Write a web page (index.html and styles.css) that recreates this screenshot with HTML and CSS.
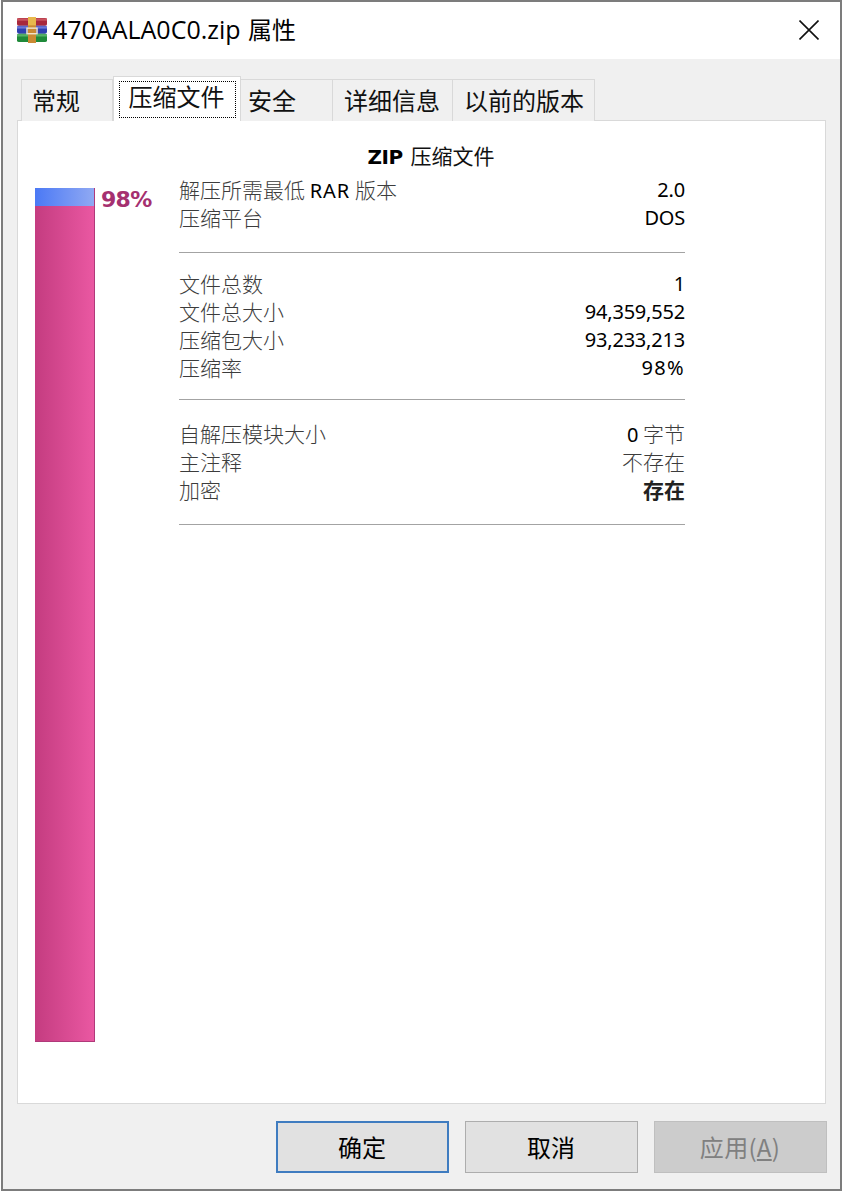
FILE: index.html
```html
<!DOCTYPE html>
<html lang="zh-CN">
<head>
<meta charset="utf-8">
<title>470AALA0C0.zip 属性</title>
<link rel="stylesheet" href="styles.css">
</head>
<body>
<div class="window">
  <header class="titlebar">
    <svg class="app-icon" width="32" height="26" viewBox="0 0 32 28" preserveAspectRatio="none">
      <rect x="1" y="1" width="30" height="8.5" rx="2" fill="#a8283c"/>
      <rect x="1" y="1.5" width="30" height="2.5" fill="#c9545f"/>
      <rect x="1" y="9.5" width="30" height="8.5" rx="2" fill="#2f3fb0"/>
      <rect x="1" y="10" width="30" height="2.5" fill="#6c78d8"/>
      <rect x="1" y="18" width="30" height="9" rx="2" fill="#1f8a3a"/>
      <rect x="1" y="18.500" width="30" height="2.500" fill="#58b268"/>
      <rect x="12" y="0" width="8" height="28" fill="#c98a34"/>
      <rect x="12" y="0" width="8" height="9" fill="#e8b84c"/>
      <rect x="11" y="12" width="10" height="6" fill="none" stroke="#f0e6d0" stroke-width="1.500"/>
    </svg>
    <h1 class="title">470AALA0C0.zip <span class="title-cjk">属性</span></h1>
    <svg class="close" width="20" height="20" viewBox="0 0 20 20">
      <path d="M0.500 0.500L19.500 19.500M19.500 0.500L0.500 19.500" stroke="#111" stroke-width="1.600" fill="none"/>
    </svg>
  </header>
  <div class="body">
    <nav class="tabs">
      <div class="tab tab-a">常规</div>
      <div class="tab tab-active"><span class="focus">压缩文件</span></div>
      <div class="tab tab-b">安全</div>
      <div class="tab tab-c">详细信息</div>
      <div class="tab tab-d">以前的版本</div>
    </nav>
    <main class="panel">
      <div class="gauge">
        <div class="bar">
          <div class="bar-free"></div>
          <div class="bar-used"></div>
        </div>
        <div class="pct">98%</div>
      </div>
      <div class="info">
        <div class="heading"><b class="latin">ZIP</b> 压缩文件</div>
        <section class="group">
          <div class="row"><span>解压所需最低 <span class="latin latin-wide">RAR</span> 版本</span><span class="latin">2.0</span></div>
          <div class="row"><span>压缩平台</span><span class="latin">DOS</span></div>
        </section>
        <section class="group">
          <div class="row"><span>文件总数</span><span class="latin">1</span></div>
          <div class="row"><span>文件总大小</span><span class="latin">94,359,552</span></div>
          <div class="row"><span>压缩包大小</span><span class="latin">93,233,213</span></div>
          <div class="row"><span>压缩率</span><span class="latin latin-ratio">98%</span></div>
        </section>
        <section class="group group-last">
          <div class="row"><span>自解压模块大小</span><span><span class="latin">0</span> 字节</span></div>
          <div class="row"><span>主注释</span><span>不存在</span></div>
          <div class="row"><span>加密</span><b class="strong">存在</b></div>
        </section>
      </div>
    </main>
    <footer class="buttons">
      <button class="btn btn-default">确定</button>
      <button class="btn">取消</button>
      <button class="btn btn-disabled">应用(<u>A</u>)</button>
    </footer>
  </div>
</div>
</body>
</html>
```
FILE: styles.css
```css
* { box-sizing: border-box; }
html, body { margin: 0; height: 100%; background: #fff; }
body { padding: 0 2px 0 1px; font-family: "Noto Sans", "Noto Sans CJK SC", sans-serif; overflow: hidden; }
.window {
  height: 1191px;
  border: 2px solid #7c7c7c;
  display: flex;
  flex-direction: column;
  background: #f0f0f0;
}
.titlebar {
  height: 57px;
  flex: none;
  background: #fff;
  display: flex;
  align-items: center;
  padding: 0 21px 1px 13px;
}
.app-icon { flex: none; margin-right: 5px; }
.title {
  margin: 0;
  padding-bottom: 3px;
  flex: 1;
  font-size: 25px;
  font-weight: 400;
  color: #000;
  font-family: "Open Sans", "Noto Sans CJK SC", sans-serif;
}
.title-cjk { font-size: 24px; margin-left: 1px; }
.close { flex: none; }
.body { flex: 1; display: flex; flex-direction: column; padding: 18px 14px 0 14px; min-height: 0; }
.tabs { display: flex; align-items: flex-end; height: 44px; flex: none; padding-left: 4px; position: relative; z-index: 1; margin-bottom: -1px; }
.tab {
  height: 42px;
  border: 1px solid #d9d9d9;
  border-bottom: 0;
  border-left-width: 0;
  background: #f0f0f0;
  font-size: 24px;
  line-height: 40px;
  color: #111;
  font-family: "Noto Sans CJK SC", sans-serif;
  white-space: nowrap;
}
.tab-a { width: 92px; border-left-width: 1px; padding-left: 10px; }
.tab-active {
  width: 128px;
  height: 45px;
  background: #fff;
  border: 1px solid #d9d9d9;
  border-bottom: 0;
  padding: 4px 4px 0 5px;
  position: relative;
}
.focus { display: block; height: 37px; border: 1px dotted #000; padding-right: 2px; text-align: center; line-height: 28px; }
.tab-b { width: 92px; padding-left: 7px; }
.tab-c { width: 120px; padding-left: 11px; }
.tab-d { width: 142px; padding-left: 11px; }
.panel {
  height: 984px;
  flex: none;
  background: #fff;
  border: 1px solid #d9d9d9;
  display: flex;
  padding: 67px 140px 0 17px;
}
.gauge { width: 144px; flex: none; display: flex; align-items: flex-start; }
.bar {
  width: 60px;
  height: 854px;
  display: flex;
  flex-direction: column;
  flex: none;
  border: 1px solid #b0397a;
  border-top: 0;
  border-left: 0;
}
.bar-free { height: 18px; background: linear-gradient(90deg, #4b79f5, #90a9f3); flex: none; }
.bar-used { flex: 1; background: linear-gradient(90deg, #c43c80, #ea58a2); }
.pct {
  margin-left: 6px;
  font-family: "DejaVu Sans", sans-serif;
  font-weight: 700;
  font-size: 22px;
  line-height: 24px;
  color: #a53070;
  letter-spacing: -0.7px;
}
.info { flex: 1; min-width: 0; margin-top: -50px; }
.heading {
  height: 39px;
  text-align: center;
  font-size: 21px;
  line-height: 34px;
  padding-right: 2px;
  color: #111;
  font-family: "Noto Sans CJK SC", sans-serif;
}
.heading b { font-family: "DejaVu Sans", sans-serif; font-weight: 700; font-size: 20px; letter-spacing: -0.5px; margin-right: 3px; color: #000; }
.group { padding: 19px 0 19px; border-bottom: 1px solid #a3a3a3; }
.group:first-of-type { padding-top: 0; padding-bottom: 19px; }
.group + .group { padding-top: 18px; padding-bottom: 16px; }
.group.group-last { padding-top: 21px; padding-bottom: 19px; }
.row {
  display: flex;
  justify-content: space-between;
  height: 28px;
  font-size: 21px;
  line-height: 25px;
  color: #3c3c3c;
  font-family: "Noto Sans CJK SC", sans-serif;
  font-weight: 300;
}
.latin { font-family: "Noto Sans", sans-serif; font-weight: 400; color: #000; font-size: 20px; letter-spacing: -0.2px; }
.latin-wide { letter-spacing: 1px; }
.latin-ratio { letter-spacing: 1.300px; }
.strong { font-weight: 700; color: #222; }
.buttons { flex: 1; display: flex; justify-content: flex-end; align-items: flex-start; gap: 16px; padding: 17px 0 0 0; margin-right: -1px; }
.btn {
  width: 173px;
  height: 52px;
  background: #e1e1e1;
  border: 1px solid #adadad;
  font-family: "Noto Sans CJK SC", sans-serif;
  font-size: 24px;
  color: #000;
  padding: 0 1px 2px 0;
}
.btn-default { border: 2px solid #3f7cc0; }
.btn-disabled { background: #cccccc; border-color: #bfbfbf; color: #808080; letter-spacing: 0.3px; }
```
